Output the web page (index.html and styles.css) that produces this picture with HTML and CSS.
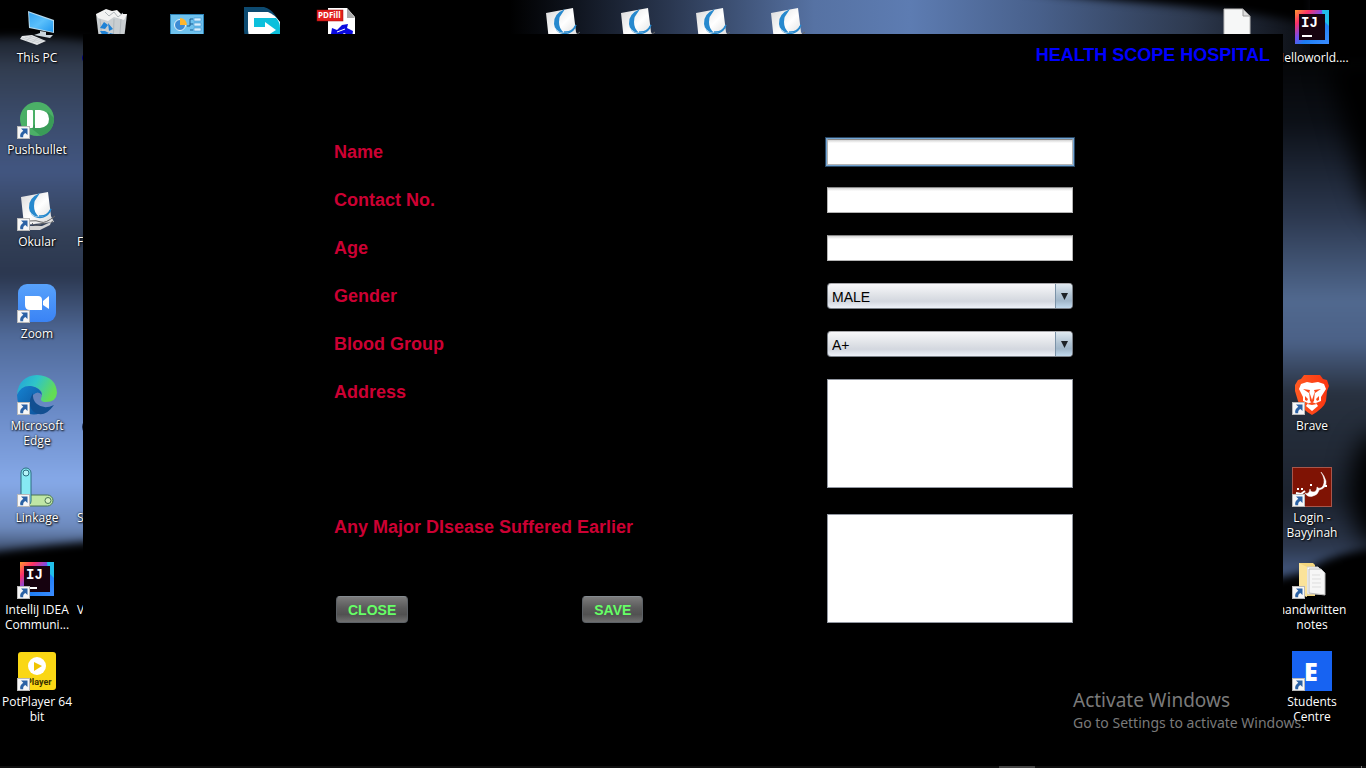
FILE: index.html
```html
<!DOCTYPE html>
<html lang="en">
<head>
<meta charset="utf-8">
<title>Health Scope Hospital</title>
<link rel="stylesheet" href="styles.css">
</head>
<body>
<svg class="wallpaper" viewBox="0 0 1366 768" preserveAspectRatio="none" aria-hidden="true">
  <defs>
    <linearGradient id="skyLeft" x1="0" y1="0" x2="0" y2="1">
      <stop offset="0" stop-color="#1c222d"/><stop offset=".06" stop-color="#323d50"/>
      <stop offset=".16" stop-color="#3b4c6c"/><stop offset=".26" stop-color="#425681"/>
      <stop offset=".38" stop-color="#334057"/><stop offset=".46" stop-color="#2b374f"/>
      <stop offset=".58" stop-color="#506a99"/><stop offset=".72" stop-color="#6a8ac6"/>
      <stop offset=".86" stop-color="#86a9e8"/><stop offset=".95" stop-color="#6d8abd"/>
      <stop offset="1" stop-color="#35445f"/>
    </linearGradient>
    <linearGradient id="skyTop" x1="0" y1="0" x2="1" y2="0">
      <stop offset="0" stop-color="#000"/><stop offset=".08" stop-color="#0f141e"/>
      <stop offset=".2" stop-color="#2a3750"/><stop offset=".38" stop-color="#5672a3"/>
      <stop offset=".5" stop-color="#5d7cb2"/><stop offset=".66" stop-color="#48608b"/>
      <stop offset=".85" stop-color="#2e3a50"/><stop offset="1" stop-color="#0b0d12"/>
    </linearGradient>
    <linearGradient id="skyRight" x1="0" y1="0" x2="0" y2="1">
      <stop offset="0" stop-color="#050608"/><stop offset=".12" stop-color="#0c1017"/>
      <stop offset=".3" stop-color="#2c384f"/><stop offset=".46" stop-color="#51698f"/>
      <stop offset=".54" stop-color="#4b6187"/><stop offset=".64" stop-color="#28313f"/>
      <stop offset=".84" stop-color="#1c232f"/><stop offset=".93" stop-color="#2c374c"/>
      <stop offset="1" stop-color="#4a628f"/>
    </linearGradient>
    <filter id="soft" x="-20%" y="-20%" width="140%" height="140%" color-interpolation-filters="sRGB"><feGaussianBlur stdDeviation="4"/></filter>
    <filter id="softer" x="-100%" y="-30%" width="300%" height="160%" color-interpolation-filters="sRGB"><feGaussianBlur stdDeviation="12"/></filter>
  </defs>
  <rect width="1366" height="768" fill="#000"/>
  <rect x="510" width="800" height="60" fill="url(#skyTop)"/>
  <path d="M1010-12 C1110 4 1220 4 1310 24 V-12Z" fill="#000" filter="url(#soft)"/>
  <path d="M-20 38 Q50 34 110 44 V540 Q50 544 -20 554Z" fill="url(#skyLeft)" filter="url(#soft)"/>
  <path d="M1260 60 L1390 60 V546 Q1330 552 1305 572 L1260 582Z" fill="url(#skyRight)" filter="url(#soft)"/>
  <path d="M1400 60 L1326 60 Q1344 130 1366 200 L1400 240Z" fill="#000" filter="url(#softer)"/>
  <ellipse cx="1378" cy="490" rx="28" ry="58" fill="#000" filter="url(#softer)"/>
  <circle cx="88" cy="58" r="6" fill="#000080"/>
  <circle cx="90" cy="427" r="8" fill="#1b2a4c"/>
</svg>

<svg class="symbols" aria-hidden="true">
  <defs>
    <linearGradient id="ij" x1="0" y1="0" x2="1" y2="1">
      <stop offset="0" stop-color="#ff9a2e"/><stop offset=".22" stop-color="#fc3068"/>
      <stop offset=".42" stop-color="#7a4be8"/><stop offset=".6" stop-color="#1c7df5"/><stop offset="1" stop-color="#3c8dff"/>
    </linearGradient>
    <linearGradient id="paper" x1="0" y1="0" x2="1" y2="1">
      <stop offset="0" stop-color="#d9d9d9"/><stop offset=".5" stop-color="#fff"/><stop offset="1" stop-color="#d4d4d4"/>
    </linearGradient>
    <linearGradient id="screen" x1="0" y1="0" x2="1" y2="1">
      <stop offset="0" stop-color="#35a4f2"/><stop offset=".5" stop-color="#5bc0fb"/><stop offset="1" stop-color="#2196ee"/>
    </linearGradient>
    <linearGradient id="zoomBlue" x1="0" y1="0" x2="0" y2="1"><stop offset="0" stop-color="#58a2fb"/><stop offset="1" stop-color="#3a83f5"/></linearGradient>
    <linearGradient id="edgeTop" x1="0" y1="0" x2="1" y2=".4"><stop offset="0" stop-color="#239fda"/><stop offset=".5" stop-color="#2fc5c8"/><stop offset="1" stop-color="#63dc55"/></linearGradient>
    <linearGradient id="edgeLow" x1="0" y1="0" x2="1" y2="1"><stop offset="0" stop-color="#1583d1"/><stop offset="1" stop-color="#0d4f98"/></linearGradient>
    <linearGradient id="braveRed" x1="0" y1="0" x2="1" y2="0"><stop offset="0" stop-color="#ff5a22"/><stop offset="1" stop-color="#fb3410"/></linearGradient>
    <symbol id="shortcut" viewBox="0 0 13 13">
      <rect x=".5" y=".5" width="12" height="12" fill="#f7f7f7" stroke="#b9b9b9"/>
      <path d="M4 2.5H10.5V9L8.4 6.9Q5.7 8.4 6.2 11.3H3.4Q2.2 7.5 6.3 4.8Z" fill="#2b62a5"/>
    </symbol>
    <symbol id="okular" viewBox="0 0 40 40">
      <path d="M4 5 31 0 34 24 37 30 7 33Z" fill="url(#paper)"/>
      <path d="M23 1Q11 6 12 16Q13 25 22 25Q30 25 34 16L33.500 20Q29 27 21 26Q12 24 13 16ZM23 1Q12 6 12 16Q14 25 22 24.500Q17 21 17 14Q17 6 23 1Z" fill="#2789ce"/>
      <path d="M22 24Q30 25 34 17" fill="none" stroke="#2789ce" stroke-width="1.500"/>
      <path d="M12 29Q20 28 24 30T38 24M15 31Q18 36 26 31Q31 34 36 29" fill="none" stroke="#666" stroke-width="1"/>
      <path d="M12 34 25 34 34 30 33 33 23 38 12 38Z" fill="#d5d5d5"/>
    </symbol>
    <symbol id="intellij" viewBox="0 0 40 40">
      <rect x="3" y="2" width="34" height="34" fill="url(#ij)"/>
      <path d="M30 2H37V18L31 12Z" fill="#21bfea"/>
      <rect x="7" y="6" width="26" height="26" fill="#16020f"/>
      <text x="9" y="19" class="ij-text">IJ</text>
      <rect x="10" y="27" width="10" height="2" fill="#fff"/>
    </symbol>
  </defs>
</svg>

<main class="desktop">
  <a href="#" class="item c1 r1"><svg class="icon" viewBox="0 0 40 40">
    <path d="M11 3 37 12 37 25 12 20Z" fill="#b5d9ed"/><path d="M12 4.500 36 13 36 24 13 19Z" fill="url(#screen)"/>
    <path d="M23 23 29 24 29 27 36 27 33 30 17 27 23 25Z" fill="#cbd5dc"/>
    <path d="M5 28 15 27 29 33 20 37 3 31Z" fill="#e4e6e8"/><path d="M5 30 22 35M8 29 25 34M12 28 27 33M9 33 15 28M14 35 21 30" stroke="#b4bac0" stroke-width=".5"/>
  </svg><span>This PC</span></a>
  <a href="#" class="item c1 r2"><svg class="icon" viewBox="0 0 40 40">
    <circle cx="20" cy="19" r="17" fill="#4bb067"/><path d="M31 12 37 18Q37 32 24 36L14 28Z" fill="#3a9c58"/>
    <rect x="10" y="10" width="6" height="18" rx="1" fill="#fff"/><path d="M18 10H23Q32 11 32 19T23 28H18Z" fill="#fff"/>
    <use href="#shortcut" x="0" y="26" width="13" height="13"/>
  </svg><span>Pushbullet</span></a>
  <a href="#" class="item c1 r3"><svg class="icon" viewBox="0 0 40 40"><use href="#okular"/><use href="#shortcut" x="0" y="26" width="13" height="13"/></svg><span>Okular</span></a>
  <a href="#" class="item c1 r4"><svg class="icon" viewBox="0 0 40 40">
    <rect x="1" y="0" width="38" height="38" rx="9" fill="url(#zoomBlue)"/>
    <path d="M8 12H21Q25 12 25 16V26H13Q8 26 8 21ZM26 17 32 12V25L26 21Z" fill="#fff"/>
    <use href="#shortcut" x="0" y="26" width="13" height="13"/>
  </svg><span>Zoom</span></a>
  <a href="#" class="item c1 r5"><svg class="icon" viewBox="0 0 40 40">
    <path d="M0 18Q2 0 20-1Q39 0 40 17Q39 27 27 26Q22 25 25 20Q26 14 18 11Q8 8 0 18Z" fill="url(#edgeTop)"/>
    <path d="M0 19Q4 9 14 10Q24 12 25 19Q21 14 16 19Q12 30 23 37Q15 41 8 35Q0 29 0 19Z" fill="url(#edgeLow)"/>
    <path d="M16 17Q9 29 17 36Q27 43 37 29Q27 34 20 28Q15 24 16 17Z" fill="#124f91"/>
    <use href="#shortcut" x="0" y="26" width="13" height="13"/>
  </svg><span>Microsoft<br>Edge</span></a>
  <a href="#" class="item c1 r6"><svg class="icon" viewBox="0 0 40 40">
    <rect x="8" y="27" width="28" height="11" rx="5.500" fill="#bfe7a5" stroke="#4b7652"/><circle cx="31" cy="32.500" r="3" fill="#d7f3c4" stroke="#4b7652"/>
    <rect x="4" y="0" width="10" height="38" rx="5" fill="#86e9f3" stroke="#2c6d80"/><circle cx="9" cy="5" r="3" fill="#b5f3f8" stroke="#2c6d80"/>
    <use href="#shortcut" x="0" y="26" width="13" height="13"/>
  </svg><span>Linkage</span></a>
  <a href="#" class="item c1 r7"><svg class="icon" viewBox="0 0 40 40"><use href="#intellij"/><use href="#shortcut" x="0" y="26" width="13" height="13"/></svg><span>IntelliJ IDEA<br>Communi...</span></a>
  <a href="#" class="item c1 r8"><svg class="icon" viewBox="0 0 40 40">
    <rect x="1" y="0" width="38" height="38" rx="3" fill="#fad714"/><circle cx="20" cy="14" r="9" fill="#fff"/><path d="M17 10 25 14 17 19Z" fill="#f0c400"/>
    <text x="9" y="33" class="player-text">Player</text>
    <use href="#shortcut" x="0" y="26" width="13" height="13"/>
  </svg><span>PotPlayer 64<br>bit</span></a>

  <a href="#" class="item c2 r1" aria-label="Bin"><svg class="icon" viewBox="0 0 40 40">
    <path d="M4 6 35 6 31 40 8 40Z" fill="#c9ced1"/><path d="M4 6 10 3 14 1 20 3 25 2 29 6 35 6 32 12 22 9 16 13 6 10Z" fill="#f3f3f3"/>
    <path d="M13 4 17 8 22 4 26 9 31 5M8 11 11 40M29 11 27 40M22 11 21 40" fill="none" stroke="#b0b7bb" stroke-width="1"/>
    <path d="M8 20 12 14 16 17 13 21ZM16 15 21 21 17 23ZM8 23 11 28 17 25 13 23ZM18 25 22 26 19 31 15 29Z" fill="#1e82d6"/>
  </svg></a>
  <a href="#" class="item c3 r1" aria-label="Control"><svg class="icon" viewBox="0 0 40 40">
    <rect x="3" y="6" width="34" height="30" fill="#2d84b8"/><rect x="4" y="7" width="32" height="28" fill="#6fc2ee"/>
    <circle cx="13" cy="17" r="5.500" fill="#3d8bd4" stroke="#e5f4fc"/><path d="M13 17V10A7 7 0 0 1 20 17Z" fill="#ffb62e"/>
    <path d="M20 18H23V11H26M23 16H26M23 22H26" fill="none" stroke="#1d5d91"/>
    <rect x="27" y="10" width="7" height="3" fill="#d6f0ff" stroke="#2b7fc2" stroke-width=".5"/><rect x="27" y="15" width="7" height="3" fill="#d6f0ff" stroke="#2b7fc2" stroke-width=".5"/><rect x="27" y="20" width="7" height="3" fill="#d6f0ff" stroke="#2b7fc2" stroke-width=".5"/>
  </svg></a>
  <a href="#" class="item c4 r1" aria-label="Transfer"><svg class="icon" viewBox="0 0 40 40">
    <path d="M2-1H22Q29 1 33 7L38 14V40H8Q2 30 2 22Z" fill="#0d4a70"/><path d="M6 4H26Q32 6 38 14V40H14Q6 30 6 22Z" fill="#fff"/>
    <path d="M12 10H34Q38 14 38 20V36H12Z" fill="#0cc0dc"/><path d="M12 19H23V14L34 22 23 29V26H12Z" fill="#fff"/>
  </svg></a>
  <a href="#" class="item c5 r1"><svg class="icon" viewBox="0 0 40 40">
    <path d="M11 0H30L38 9V40H11Z" fill="#fff"/><path d="M30 0V10H38Z" fill="#aaa"/>
    <rect x="0" y="2" width="26" height="11" fill="#e3201d" stroke="#a30e0e" stroke-width=".5"/><text x="1" y="10" class="pdf-text">PDFill</text>
    <path d="M15 20 20 22 25 17 31 16 30 20 36 23 35 29 27 25 23 29 14 26Z" fill="#0a0ae0"/><path d="M20 24 28 21" stroke="#fff"/>
  </svg></a>
  <a href="#" class="item c8 r1" aria-label="Document 1"><svg class="icon" viewBox="0 0 40 40"><use href="#okular"/></svg></a>
  <a href="#" class="item c9 r1" aria-label="Document 2"><svg class="icon" viewBox="0 0 40 40"><use href="#okular"/></svg></a>
  <a href="#" class="item c10 r1" aria-label="Document 3"><svg class="icon" viewBox="0 0 40 40"><use href="#okular"/></svg></a>
  <a href="#" class="item c11 r1" aria-label="Document 4"><svg class="icon" viewBox="0 0 40 40"><use href="#okular"/></svg></a>
  <a href="#" class="item c17 r1" aria-label="File"><svg class="icon" viewBox="0 0 40 40"><path d="M7 1H26L33 8V40H7Z" fill="#f6f7f7" stroke="#bbb"/><path d="M26 1V8H33Z" fill="#ddd" stroke="#999"/></svg></a>

  <a href="#" class="item cut c2 r3"><span>F</span></a>
  <a href="#" class="item cut c2 r6"><span>S</span></a>
  <a href="#" class="item cut c2 r7"><span>V</span></a>

  <a href="#" class="item c18 r1"><svg class="icon" viewBox="0 0 40 40"><use href="#intellij"/></svg><span>Helloworld....</span></a>
  <a href="#" class="item c18 r5"><svg class="icon" viewBox="0 0 40 40">
    <path d="M12-1H28L31 3 35 4 37 10 35 15 34 25Q32 32 20 39Q8 32 6 25L3 15 3 9 6 4 9 3Z" fill="url(#braveRed)"/>
    <path d="M9 8 15 6 20 7 26 6 32 8 34 13 29 21 29 25 24 27 26 30 20 35 14 30 16 27 11 25 11 21 7 13Z" fill="#fff"/>
    <path d="M11 13 18 14 17 17ZM29 13 22 14 23 17ZM17 15 20 24 23 15 22 25 20 27 18 25ZM13 20 16 23 15 25 13 24ZM27 20 24 23 25 25 27 24Z" fill="#fb4b1c"/>
    <path d="M15 28 20 26 25 28 20 29Z" fill="#fb4b1c"/>
    <use href="#shortcut" x="0" y="26" width="13" height="13"/>
  </svg><span>Brave</span></a>
  <a href="#" class="item c18 r6"><svg class="icon" viewBox="0 0 40 40">
    <rect x=".5" y="-.5" width="39" height="39" fill="#7f1304" stroke="#a8564a"/>
    <path d="M29 4Q34 12 31 18Q28 22 25 19Q25 24 21 24Q18 24 18 21Q17 27 13 25Q16 30 21 28Q26 27 27 22Q35 20 34 13Q32 7 29 4Z" fill="#fff" stroke="#fff" stroke-width=".5"/>
    <path d="M4 25 9 26 13 23M5 21h2M9 21h2M18 17h2M33 18h2" fill="none" stroke="#fff" stroke-width="2"/>
    <use href="#shortcut" x="0" y="26" width="13" height="13"/>
  </svg><span>Login -<br>Bayyinah</span></a>
  <a href="#" class="item c18 r7"><svg class="icon" viewBox="0 0 40 40">
    <path d="M7 3H21L23 5V36H7Z" fill="#f4d67e"/><path d="M15 7H26L29 10V34H15Z" fill="#fff" stroke="#ccc"/><path d="M17 9H29L33 13V35L17 33Z" fill="#f6f6f6" stroke="#bbb"/>
    <path d="M20 15h8M20 19h9M20 23h9M20 27h9" stroke="#ddd"/><path d="M7 3 15 7V37L7 34Z" fill="#fbe399"/>
    <use href="#shortcut" x="0" y="26" width="13" height="13"/>
  </svg><span>handwritten<br>notes</span></a>
  <a href="#" class="item c18 r8"><svg class="icon" viewBox="0 0 40 40">
    <rect x="0" y="-1" width="40" height="40" fill="#1763f2"/><text x="12" y="29" class="e-text">E</text>
    <use href="#shortcut" x="0" y="26" width="13" height="13"/>
  </svg><span>Students<br>Centre</span></a>
</main>

<section class="window">
  <h1 class="title">HEALTH SCOPE HOSPITAL</h1>
  <form class="form">
    <label for="name">Name</label><input class="field focused" id="name" type="text">
    <label for="contact">Contact No.</label><input class="field" id="contact" type="text">
    <label for="age">Age</label><input class="field" id="age" type="text">
    <label for="gender">Gender</label>
    <div class="combo"><select id="gender"><option>MALE</option><option>FEMALE</option></select></div>
    <label for="blood">Blood Group</label>
    <div class="combo"><select id="blood"><option>A+</option><option>B+</option><option>O+</option></select></div>
    <label for="address">Address</label><textarea class="area" id="address"></textarea>
    <div class="last">
      <label for="disease">Any Major DIsease Suffered Earlier</label>
      <div class="actions"><button type="button">CLOSE</button><button type="button">SAVE</button></div>
    </div>
    <textarea class="area tail" id="disease"></textarea>
  </form>
</section>

<aside class="activate"><p class="activate-title">Activate Windows</p><p class="activate-text">Go to Settings to activate Windows.</p></aside>
<div class="taskbar"><span class="task"></span><span class="peek"></span></div>
</body>
</html>
```
FILE: styles.css
```css
* { box-sizing: border-box; }

body {
  margin: 0;
  min-height: 100vh;
  position: relative;
  overflow: hidden;
  background: #000;
  font-family: "Liberation Sans", Arial, sans-serif;
}

.wallpaper {
  position: absolute;
  inset: 0;
  width: 100%;
  height: 100%;
}

.symbols { position: absolute; width: 0; height: 0; }

.desktop {
  position: relative;
  display: grid;
  grid-template-columns: repeat(18, 74px);
  grid-template-rows: repeat(8, 92px);
  column-gap: 1px;
}

.item {
  display: flex;
  flex-direction: column;
  align-items: center;
  gap: 2px;
  padding-top: 8px;
  color: #fff;
  font: 12px/15px "Open Sans", "Noto Sans", sans-serif;
  text-align: center;
  text-decoration: none;
  text-shadow: 1px 1px 2px #000, 0 0 2px #000;
  white-space: nowrap;
}

.icon { width: 40px; height: 40px; flex: none; overflow: visible; }
.item.cut { align-items: flex-start; padding-top: 50px; padding-left: 2px; }

.c1 { grid-column: 1; }
.c2 { grid-column: 2; }
.c3 { grid-column: 3; }
.c4 { grid-column: 4; }
.c5 { grid-column: 5; }
.c8 { grid-column: 8; }
.c9 { grid-column: 9; }
.c10 { grid-column: 10; }
.c11 { grid-column: 11; }
.c17 { grid-column: 17; }
.c18 { grid-column: 18; }
.r1 { grid-row: 1; }
.r2 { grid-row: 2; }
.r3 { grid-row: 3; }
.r4 { grid-row: 4; }
.r5 { grid-row: 5; }
.r6 { grid-row: 6; }
.r7 { grid-row: 7; }
.r8 { grid-row: 8; }

.icon text, .ij-text { text-shadow: none; }
.ij-text { font: bold 14px "Liberation Mono", monospace; fill: #fff; }
.player-text { font: bold 9px Roboto, sans-serif; fill: #3a3000; }
.pdf-text { font: bold 8px "Open Sans", sans-serif; fill: #fff; }
.e-text { font: 800 25px "Open Sans", sans-serif; fill: #fff; }

.window {
  position: absolute;
  top: 34px;
  left: 83px;
  right: 83px;
  padding-bottom: 111px;
  background: #000;
}

.title {
  margin: 0;
  padding: 8px 13px 0;
  color: #00f;
  font-size: 18px;
  line-height: 26px;
  text-align: right;
}

.form {
  display: grid;
  grid-template-columns: 1fr 246px;
  row-gap: 22px;
  padding: 71px 210px 0 251px;
}

.form label {
  color: #cc0033;
  font-size: 18px;
  font-weight: bold;
  line-height: 26px;
}

.field {
  width: 100%;
  height: 26px;
  padding: 0 4px;
  border: 1px solid #b4b4b4;
  border-top-color: #8a8a8a;
  border-radius: 0;
  outline: none;
  background: linear-gradient(#d4d4d4, #fff 3px);
  font: 14px "Liberation Sans", Arial, sans-serif;
}

.field.focused { box-shadow: 0 0 0 1px #73a4d1, 0 0 0 2px #294764; }

.combo { position: relative; height: 26px; }

.combo select {
  appearance: none;
  width: 100%;
  height: 26px;
  padding: 2px 4px 0;
  border: 1px solid #7b8189;
  border-top-color: #a9a9ad;
  border-radius: 4px;
  background: linear-gradient(#f8f8fa, #dfe2e7 48%, #d3d7df 72%, #edf1f8);
  color: #000;
  font: 14px "Liberation Sans", Arial, sans-serif;
}

.combo::before {
  content: "";
  position: absolute;
  top: 1px;
  right: 1px;
  bottom: 1px;
  width: 16px;
  border-left: 1px solid #7c93a8;
  border-radius: 0 3px 3px 0;
  background: linear-gradient(#dfe9f0, #afc2d2 48%, #a0b6c9 70%, #c2daee);
  pointer-events: none;
}

.combo::after {
  content: "";
  position: absolute;
  top: 10px;
  right: 5px;
  width: 7px;
  height: 7px;
  background: #1d2226;
  clip-path: polygon(0 0, 100% 0, 50% 100%);
  pointer-events: none;
}

.area {
  display: block;
  width: 100%;
  height: 109px;
  padding: 4px;
  border: 1px solid #9297a1;
  border-radius: 0;
  outline: none;
  background: #fff;
  resize: none;
  font: 14px "Liberation Sans", Arial, sans-serif;
}

.last, .tail { margin-top: 4px; }

.last {
  display: flex;
  flex-direction: column;
  justify-content: space-between;
  align-items: flex-start;
}

.actions { display: flex; gap: 174px; padding-left: 2px; }

.actions button {
  height: 27px;
  padding: 0 11px;
  border: 1px solid #5c6166;
  border-top-color: #858b90;
  border-radius: 4px;
  background: linear-gradient(#7b7b7b, #5a5a5a 45%, #515151 70%, #707070);
  color: #66ff66;
  font: bold 14px "Liberation Sans", Arial, sans-serif;
}

.activate {
  position: absolute;
  right: 57px;
  bottom: 35px;
  width: 236px;
  color: #7a7a7a;
  font-family: "Noto Sans", "Open Sans", sans-serif;
  white-space: nowrap;
  pointer-events: none;
}

.activate p { margin: 0; }
.activate-title { font-size: 19px; line-height: 26px; }
.activate-text { font-size: 14px; line-height: 20px; }

.taskbar {
  position: absolute;
  left: 0;
  right: 0;
  bottom: 0;
  display: flex;
  justify-content: flex-end;
  gap: 326px;
  height: 2px;
  padding-right: 4px;
  background: #101010;
}

.task { width: 36px; background: #444; }
.peek { width: 1px; background: #777; }
```
